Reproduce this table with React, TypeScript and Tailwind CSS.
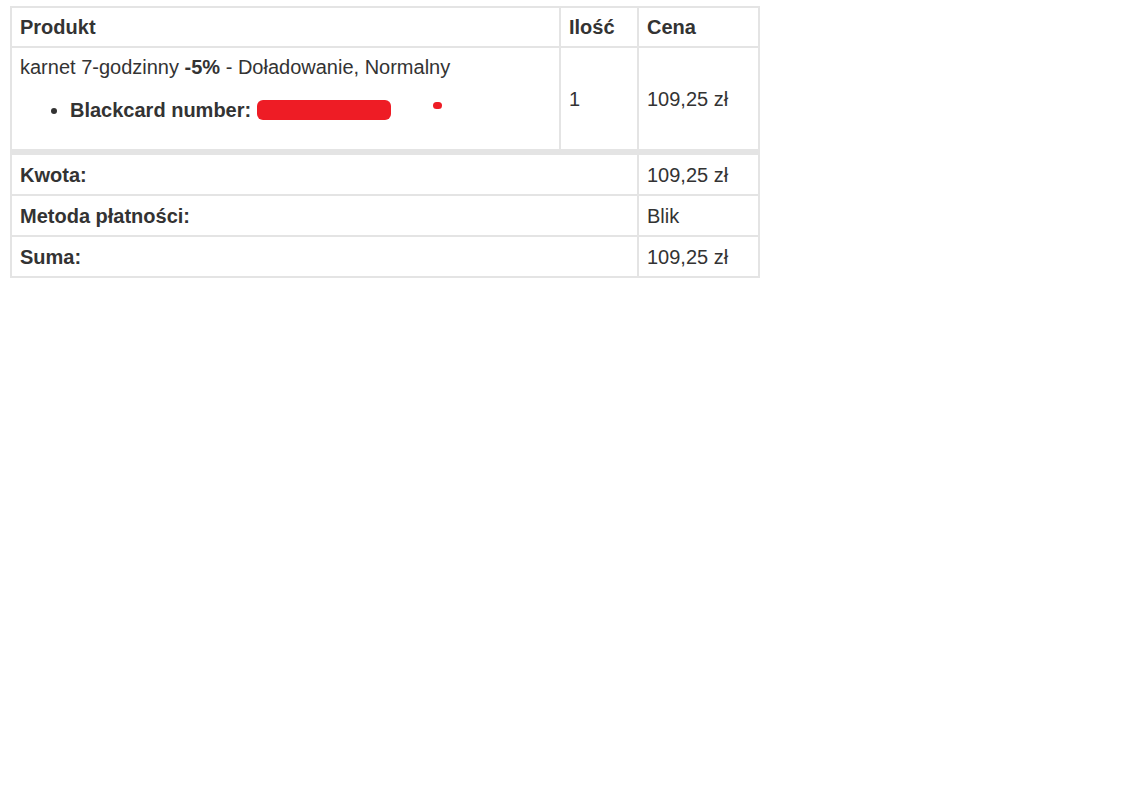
import React from "react";

export default function App() {
  const cell = "border border-[#e4e4e4] px-2 align-middle";
  return (
    <div className="min-h-screen bg-white pl-[10px] pt-[6px] text-[20px] leading-[30px] text-[#333333]" style={{ fontFamily: '"Liberation Sans", Arial, sans-serif' }}>
      <table className="w-[750px] table-fixed border-separate border-spacing-0 border border-[#e4e4e4]">
        <colgroup>
          <col className="w-[549px]" />
          <col className="w-[78px]" />
          <col className="w-[121px]" />
        </colgroup>
        <thead>
          <tr>
            <th className={`${cell} py-1 text-left font-bold`}>Produkt</th>
            <th className={`${cell} py-1 text-left font-bold`}>Ilość</th>
            <th className={`${cell} py-1 text-left font-bold`}>Cena</th>
          </tr>
        </thead>
        <tbody>
          <tr>
            <td className={`${cell} py-1`}>
              <div>
                karnet 7-godzinny <strong className="font-bold">-5%</strong> - Doładowanie, Normalny
              </div>
              <ul className="mt-[13px] mb-[20px] list-disc pl-[50px]">
                <li>
                  <strong className="font-bold">Blackcard number:</strong>{" "}
                  <span className="relative inline-block h-[20px] w-[134px] translate-y-[3px] rounded-[6px] bg-[#ee1c25] align-baseline" />
                  <span className="ml-[42px] inline-block h-[7px] w-[9px] -translate-y-[8px] rounded-full bg-[#ee1c25] align-baseline" />
                </li>
              </ul>
            </td>
            <td className={`${cell} py-1`}>1</td>
            <td className={`${cell} py-1`}>109,25 zł</td>
          </tr>
        </tbody>
        <tfoot>
          <tr>
            <th colSpan={2} className={`${cell} border-t-[5px] pt-[5px] pb-1 text-left font-bold`}>Kwota:</th>
            <td className={`${cell} border-t-[5px] pt-[5px] pb-1`}>109,25 zł</td>
          </tr>
          <tr>
            <th colSpan={2} className={`${cell} pt-[5px] pb-1 text-left font-bold`}>Metoda płatności:</th>
            <td className={`${cell} pt-[5px] pb-1`}>Blik</td>
          </tr>
          <tr>
            <th colSpan={2} className={`${cell} pt-[5px] pb-1 text-left font-bold`}>Suma:</th>
            <td className={`${cell} pt-[5px] pb-1`}>109,25 zł</td>
          </tr>
        </tfoot>
      </table>
    </div>
  );
}
